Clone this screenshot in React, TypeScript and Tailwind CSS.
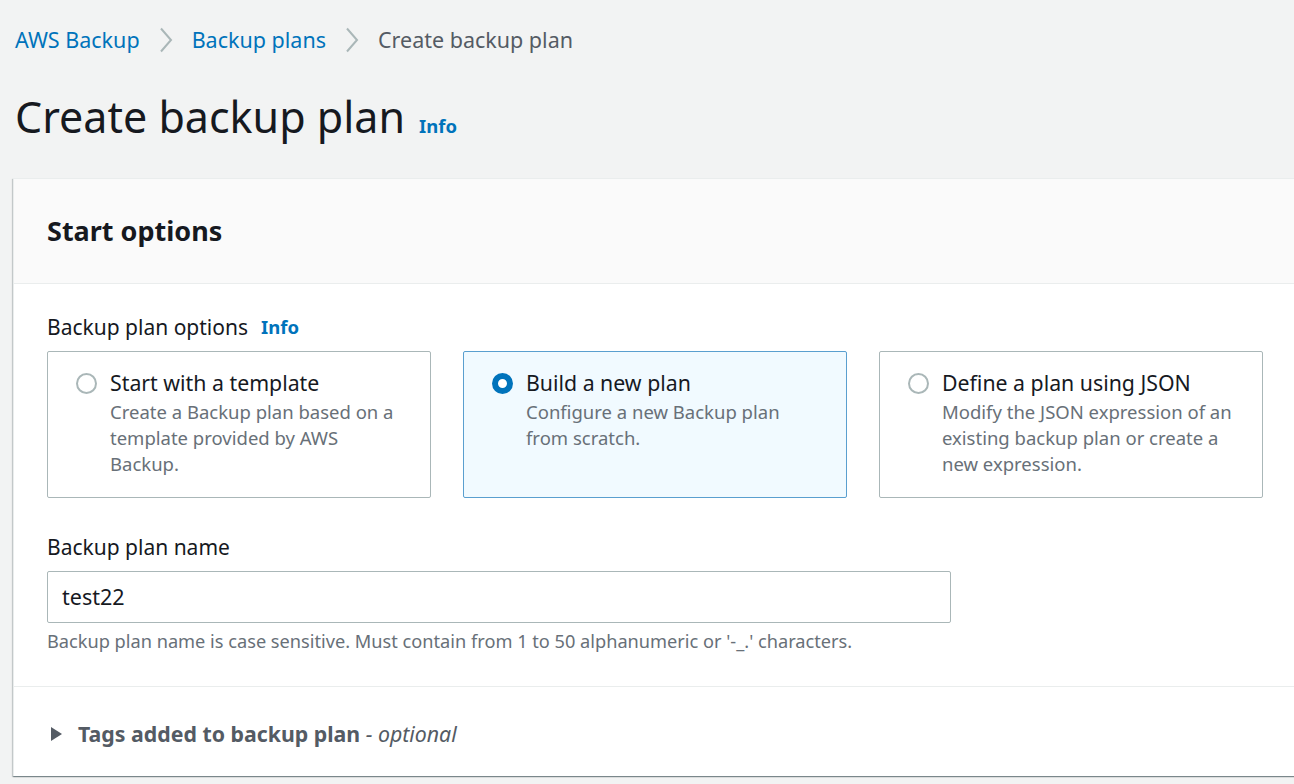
const options = [
  {
    title: "Start with a template",
    desc: "Create a Backup plan based on a template provided by AWS Backup.",
    selected: false,
  },
  {
    title: "Build a new plan",
    desc: "Configure a new Backup plan from scratch.",
    selected: true,
  },
  {
    title: "Define a plan using JSON",
    desc: "Modify the JSON expression of an existing backup plan or create a new expression.",
    selected: false,
  },
]

function Radio({ on }: { on: boolean }) {
  if (on) {
    return <span className="mt-[4px] block size-[21px] shrink-0 rounded-full border-[6px] border-[#0073bb] bg-white" />
  }
  return <span className="mt-[4px] block size-[21px] shrink-0 rounded-full border-2 border-[#aab7b8] bg-white" />
}

function Chevron() {
  return (
    <svg width="14" height="26" viewBox="0 0 14 26" className="text-[#aab7b8]">
      <path d="M2 1.5 L12 13 L2 24.5" fill="none" stroke="currentColor" strokeWidth="2" />
    </svg>
  )
}

export default function App() {
  return (
    <div className="h-[784px] w-[1294px] overflow-hidden bg-[#f2f3f3] font-['Noto_Sans',sans-serif] text-[#16191f]">
      <nav className="flex items-center gap-[19px] px-[15px] pt-[25px] text-[21.5px] leading-[30px]">
        <span className="text-[#0073bb]">AWS Backup</span>
        <Chevron />
        <span className="text-[#0073bb]">Backup plans</span>
        <Chevron />
        <span className="text-[#545b64]">Create backup plan</span>
      </nav>

      <div className="flex items-baseline gap-[14px] px-[15px] pt-[34px] pb-[33px]">
        <h1 className="text-[43px] leading-[56px] font-normal">Create backup plan</h1>
        <span className="text-[18.5px] font-bold text-[#0073bb]">Info</span>
      </div>

      <div className="ml-[13px] w-[1300px] border-l border-t border-[#eaeded] bg-white shadow-[0_1px_1px_0_rgba(0,28,36,0.3),1px_1px_1px_0_rgba(0,28,36,0.15),-1px_1px_1px_0_rgba(0,28,36,0.15)]">
        <div className="flex h-[105px] items-center border-b border-[#eaeded] bg-[#fafafa] px-[33px]">
          <h2 className="text-[27px] leading-[34px] font-bold">Start options</h2>
        </div>

        <div className="px-[33px] pt-[29px] pb-[33px]">
          <div className="flex items-center gap-[13px] text-[21px] leading-[28px]">
            <span>Backup plan options</span>
            <span className="text-[18.5px] font-bold text-[#0073bb]">Info</span>
          </div>

          <div className="mt-[10px] grid w-[1216px] grid-cols-3 gap-[32px]">
            {options.map((o) => (
              <div
                key={o.title}
                className={
                  o.selected
                    ? "flex h-[147px] gap-[13px] rounded-[2px] border border-[#5a9fcf] bg-[#f1faff] pl-[28px] pt-[17px]"
                    : "flex h-[147px] gap-[13px] rounded-[2px] border border-[#aab7b8] bg-white pl-[28px] pt-[17px]"
                }
              >
                <Radio on={o.selected} />
                <div className="w-[300px]">
                  <div className="text-[21.3px] leading-[28px]">{o.title}</div>
                  <div className="mt-[2px] text-[18.5px] leading-[26px] text-[#687078]">{o.desc}</div>
                </div>
              </div>
            ))}
          </div>

          <div className="mt-[35px] text-[21px] leading-[28px]">Backup plan name</div>
          <div className="mt-[10px] flex h-[52px] w-[904px] items-center rounded-[2px] border border-[#aab7b8] bg-white px-[14px] text-[21.5px]">
            test22
          </div>
          <div className="mt-[6px] text-[18.2px] leading-[24px] text-[#687078]">
            Backup plan name is case sensitive. Must contain from 1 to 50 alphanumeric or '-_.' characters.
          </div>
        </div>

        <div className="flex h-[90px] items-center gap-[15px] border-t border-[#eaeded] pl-[36px] pt-[4px]">
          <svg width="13" height="16" viewBox="0 0 13 16" className="text-[#545b64]">
            <path d="M1 1 L12 8 L1 15 Z" fill="currentColor" />
          </svg>
          <span className="text-[21.3px] font-bold text-[#545b64]">
            Tags added to backup plan <span className="font-normal italic">- optional</span>
          </span>
        </div>
      </div>
    </div>
  )
}
